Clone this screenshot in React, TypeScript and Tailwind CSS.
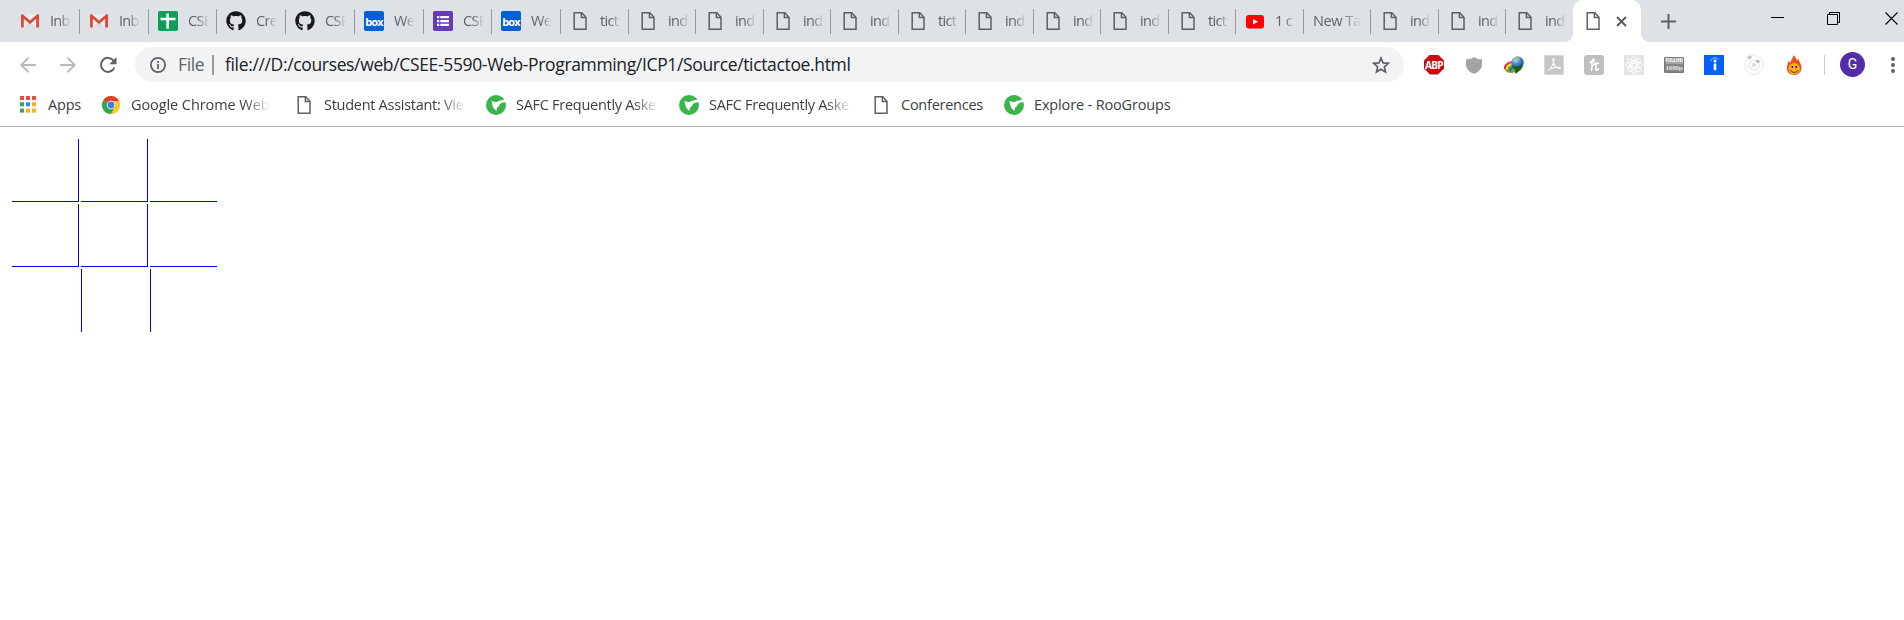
import type { ReactNode } from 'react';
import { FaGithub } from 'react-icons/fa';

type IconName = 'gmail' | 'sheet' | 'github' | 'box' | 'forms' | 'doc' | 'youtube' | 'none';

const tabs: { icon: IconName; title: string; width: string }[] = [
  { icon: 'gmail', title: 'Inb', width: 'w-[69px]' },
  { icon: 'gmail', title: 'Inb', width: 'w-[69px]' },
  { icon: 'sheet', title: 'CSE', width: 'w-[68px]' },
  { icon: 'github', title: 'Cre', width: 'w-[69px]' },
  { icon: 'github', title: 'CSE', width: 'w-[69px]' },
  { icon: 'box', title: 'We', width: 'w-[69px]' },
  { icon: 'forms', title: 'CSE', width: 'w-[68px]' },
  { icon: 'box', title: 'We', width: 'w-[69px]' },
  { icon: 'doc', title: 'tict', width: 'w-[68px]' },
  { icon: 'doc', title: 'ind', width: 'w-[67px]' },
  { icon: 'doc', title: 'ind', width: 'w-[68px]' },
  { icon: 'doc', title: 'ind', width: 'w-[67px]' },
  { icon: 'doc', title: 'ind', width: 'w-[68px]' },
  { icon: 'doc', title: 'tict', width: 'w-[67px]' },
  { icon: 'doc', title: 'ind', width: 'w-[68px]' },
  { icon: 'doc', title: 'ind', width: 'w-[67px]' },
  { icon: 'doc', title: 'ind', width: 'w-[68px]' },
  { icon: 'doc', title: 'tict', width: 'w-[67px]' },
  { icon: 'youtube', title: '1 c', width: 'w-[68px]' },
  { icon: 'none', title: 'New Ta', width: 'w-[67px]' },
  { icon: 'doc', title: 'ind', width: 'w-[68px]' },
  { icon: 'doc', title: 'ind', width: 'w-[67px]' },
  { icon: 'doc', title: 'ind', width: 'w-[67px]' },
];

function DocIcon() {
  return (
    <svg className="shrink-0" width="20" height="20" viewBox="0 0 20 20" fill="none" stroke="#5f6063" strokeWidth="1.5">
      <path d="M4.2 1.8h7.6l4.2 4.4v12H4.2z" />
      <path d="M11.4 1.8v4.8H16" />
    </svg>
  );
}

function RooIcon() {
  return (
    <svg className="shrink-0" width="20" height="20" viewBox="0 0 20 20">
      <circle cx="10" cy="10" r="10" fill="#39b54a" />
      <path d="M5.300 6L10 7.300l3.500-1.500L18.700 4.500 20 7l-4.200.8-2 1.500-.8 2-1.700 1-1 3.700-3.300-3.500-.7-3z" fill="#fff" />
    </svg>
  );
}

function TabIcon({ name }: { name: IconName }) {
  switch (name) {
    case 'gmail':
      return (
        <svg width="20" height="20" viewBox="0 0 20 20">
          <path d="M1.500 3.500h17v13h-17z" fill="#eeeeee" />
          <path d="M3.500 16.500L10 10l6.500 6.500z" fill="#dcdcdc" />
          <path d="M1 4.500C1 3.500 2 3 3 3.500l7 6 7-6c1-.5 2 0 2 1v12h-2.800V7.800L10 13 3.800 7.800v8.700H1z" fill="#dc483c" />
        </svg>
      );
    case 'sheet':
      return (
        <svg width="20" height="20" viewBox="0 0 20 20">
          <rect width="20" height="20" rx="1.800" fill="#0f9d58" />
          <path d="M8.300 2.500h2.600v4.200h6.600v2.600h-6.600v8.400H8.300V9.300H2.500V6.700h5.800z" fill="#fff" />
        </svg>
      );
    case 'github':
      return <FaGithub size={20} color="#191717" />;
    case 'box':
      return (
        <span className="flex h-5 w-5 items-center justify-center rounded-[2px] bg-[#0061d5] text-[11px] leading-none font-bold tracking-[-0.8px] text-white">
          box
        </span>
      );
    case 'forms':
      return (
        <svg width="20" height="20" viewBox="0 0 20 20">
          <rect width="20" height="20" rx="1.800" fill="#673ab7" />
          <path d="M4 5h2.300v2.300H4zM7.300 5H16v2.300H7.300zM4 8.900h2.300v2.300H4zM7.300 8.900H16v2.300H7.300zM4 12.800h2.300v2.300H4zM7.300 12.800H16v2.300H7.300z" fill="#fff" />
        </svg>
      );
    case 'youtube':
      return (
        <svg width="20" height="20" viewBox="0 0 20 20">
          <rect x="1" y="4" width="18" height="13.400" rx="3" fill="#f00" />
          <path d="M8 7.900l5 2.800-5 2.800z" fill="#fff" />
        </svg>
      );
    default:
      return <DocIcon />;
  }
}

function Tab({ icon, title, width, last }: { icon: IconName; title: string; width: string; last: boolean }) {
  const wide = icon === 'none';
  return (
    <div className={`flex h-[25px] shrink-0 items-center ${width} ${last ? '' : 'border-r border-[#989a9d]'}`}>
      {!wide && (
        <span className="ml-[9px] h-5 w-5 shrink-0">
          <TabIcon name={icon} />
        </span>
      )}
      <span
        className={
          wide
            ? 'ml-[9px] w-[48px] overflow-hidden pb-px text-[14.500px] tracking-[-0.4px] whitespace-nowrap text-[#5f6368] [mask-image:linear-gradient(to_right,#000_60%,transparent)]'
            : 'ml-[10px] w-[21px] overflow-hidden pb-px text-[14.500px] tracking-[-0.7px] whitespace-nowrap text-[#5f6368] [mask-image:linear-gradient(to_right,#000_45%,transparent)]'
        }
      >
        {title}
      </span>
    </div>
  );
}

function TabStrip() {
  return (
    <header className="flex h-[42px] bg-[#dee1e6] pl-[11px]">
      <div className="flex items-center">
        {tabs.map((tab, i) => (
          <Tab key={i} {...tab} last={i === tabs.length - 1} />
        ))}
      </div>
      <div className="relative flex w-[68px] items-center rounded-t-[10px] bg-white pl-[10px]">
        <span className="absolute bottom-0 -left-2 h-2 w-2 bg-[radial-gradient(circle_at_0_0,transparent_7.5px,#fff_8px)]" />
        <span className="absolute -right-2 bottom-0 h-2 w-2 bg-[radial-gradient(circle_at_100%_0,transparent_7.5px,#fff_8px)]" />
        <DocIcon />
        <svg className="ml-[13px]" width="11" height="11" viewBox="0 0 11 11" stroke="#55585c" strokeWidth="1.900">
          <path d="M1 1l9 9M10 1l-9 9" />
        </svg>
      </div>
      <svg className="mt-[14px] ml-5" width="15" height="15" viewBox="0 0 15 15" stroke="#5f6368" strokeWidth="2">
        <path d="M7.500 0v15M0 7.500h15" />
      </svg>
      <div className="mt-3 ml-auto flex h-[13px] gap-[43px] pr-[6px]">
        <svg width="13" height="13" stroke="#000">
          <path d="M0 5.500h13" />
        </svg>
        <svg width="13" height="13" fill="none" stroke="#000">
          <path d="M.5 2.500h10v10H.5zM2.500 2.500v-2h10v10h-2" />
        </svg>
        <svg width="13" height="13" className="ml-[2px]" stroke="#000" strokeWidth="1.100">
          <path d="M.5.5l12 12M12.500.5l-12 12" />
        </svg>
      </div>
    </header>
  );
}

const extensions: ReactNode[] = [
  <span className="flex h-5 w-5 items-center justify-center bg-[#c70d12] font-['Noto_Sans'] text-[10px] leading-none font-bold tracking-[-0.600px] text-white [clip-path:polygon(30%_0,70%_0,100%_30%,100%_70%,70%_100%,30%_100%,0_70%,0_30%)]">
    ABP
  </span>,
  <svg width="20" height="20">
    <path d="M10 2c2 1.500 5 2.300 8 2.300v5c0 4.500-3 7.500-8 9.700-5-2.200-8-5.200-8-9.700v-5C5 4.300 8 3.500 10 2z" fill="#a4a4a4" />
  </svg>,
  <svg width="20" height="20" fill="none">
    <defs>
      <radialGradient id="globe" cx=".35" cy=".25" r=".8">
        <stop offset="0" stopColor="#c5e4f8" />
        <stop offset=".45" stopColor="#4f8fd0" />
        <stop offset="1" stopColor="#123c78" />
      </radialGradient>
    </defs>
    <path d="M.8 14.500c1 3.500 6 4.500 11 2.500L10 8 3 9z" fill="#7da52f" />
    <path d="M1 14C0 9 6 6.500 11 7.500" stroke="#e8322c" strokeWidth="2" />
    <path d="M2.900 14.800C2 11 7 8.500 11 9.300" stroke="#ffd53d" strokeWidth="1.900" />
    <path d="M4.700 15.500c-.5-3 3-5 7-4.500" stroke="#35a83d" strokeWidth="1.800" />
    <path d="M6.400 16.500c-.5-2.500 2-4 5-4" stroke="#3d58c8" strokeWidth="1.700" />
    <circle cx="13.500" cy="7.500" r="6.200" fill="url(#globe)" />
    <path d="M10 4c1.500-2 4-2.200 5.500-1.500l-1.500 2-3 .5z" fill="#a9b84c" />
    <path d="M8 10.500l5 1 6-.5-2 3.500-5.500 4.500-.5-4z" fill="#12641b" />
  </svg>,
  <svg width="20" height="20" fill="none">
    <path d="M.5.5h19v19H.5z" fill="#c6c6c6" stroke="#dadada" />
    <path d="M4 15.500c2-1 6-6 6-11 0-1.500-1.500-1-1 1 .6 4 3 7 6 8 2 .5 2-1.300 0-1.300-4 0-7 1-10 2.300" stroke="#fff" strokeWidth="1.100" />
  </svg>,
  <svg width="20" height="20" fill="none">
    <rect width="20" height="20" rx="3" fill="#bfbfbf" />
    <path d="M5.800 7.300c3 .7 4.900-1 4.200-2.600C9.200 3.500 7.600 5 8 8c.2 2.500 0 5-.5 7.300M8 11.500c1.800-2.500 4.200-3 4.200-.8 0 1.800-1.300 4.500.1 4.500 1 0 1.700-.7 2.200-1.500M11 8.300c1.200.4 2.300.3 3.500-.3" stroke="#fff" strokeWidth="1.500" strokeLinecap="round" />
  </svg>,
  <svg width="20" height="20" fill="none">
    <rect width="20" height="20" fill="#e3e3e3" />
    <g stroke="#fff" strokeWidth=".9">
      <circle cx="10" cy="10" r="2" />
      <ellipse cx="10" cy="10" rx="3.300" ry="8.500" />
      <ellipse cx="10" cy="10" rx="3.300" ry="8.500" transform="rotate(45 10 10)" />
      <ellipse cx="10" cy="10" rx="3.300" ry="8.500" transform="rotate(90 10 10)" />
      <ellipse cx="10" cy="10" rx="3.300" ry="8.500" transform="rotate(135 10 10)" />
    </g>
  </svg>,
  <span className="mt-[2px] flex h-4 w-5 flex-col items-center justify-center rounded-[1px] border border-[#777] bg-[#858585] font-bold text-[#e2e2e2]">
    <span className="flex h-[6px] w-[17px] items-center justify-center bg-[#a5a5a5] text-[4.500px] leading-none text-white">FULLHD</span>
    <span className="font-['Liberation_Serif'] text-[7px] leading-[8px] tracking-[-0.200px]">1080p</span>
  </span>,
  <svg width="20" height="20" fill="none">
    <rect width="20" height="20" fill="#0560fa" />
    <path d="M9.700 8.500h2.600v6.700H9.700z" fill="#fff" />
    <circle cx="11" cy="5.900" r="1.500" fill="#fff" />
    <path d="M6.500 6.300c.8-3.300 5-4.600 8-2" stroke="#a9c9ff" strokeWidth="1" />
  </svg>,
  <svg width="20" height="20" fill="none" stroke="#e6e6e6">
    <circle cx="10" cy="10" r="9.300" />
    <circle cx="10" cy="10" r="5" strokeWidth="1.200" />
    <circle cx="10" cy="10" r="2.200" fill="#dedede" stroke="none" />
    <circle cx="5.500" cy="2.300" r="2" fill="#c4c4c4" stroke="none" />
    <circle cx="13.800" cy="6.300" r="1.900" fill="#bdbdbd" stroke="none" />
  </svg>,
  <svg width="20" height="20" fill="none">
    <path d="M9 .3c3 1.500 3.500 3.500 4 5.200l1.500-2c0 3 3.200 5 3 9.500-.3 4.300-3.300 7-7.200 7s-7.500-2.700-7.500-6.700c0-3 1.300-4.500 1.600-7.300l2 2C6.300 5 9.500 4 9 .3z" fill="#e8501f" />
    <circle cx="10.200" cy="13.700" r="5.700" fill="#fbb01b" />
    <path d="M6.700 15.200c1.500 2.900 5.700 2.900 7.200 0" stroke="#3a2208" strokeWidth="1" />
    <ellipse cx="8.300" cy="12" rx=".8" ry="1.300" fill="#2b1a08" />
    <ellipse cx="12.200" cy="12" rx=".8" ry="1.300" fill="#2b1a08" />
  </svg>,
];

function Toolbar() {
  return (
    <div className="flex h-10 items-center pt-[5px]">
      <svg className="ml-5" width="16" height="16" fill="none" stroke="#b9bbbd" strokeWidth="2">
        <path d="M16 8H1.500M8.500.7L1.300 8l7.200 7.300" />
      </svg>
      <svg className="ml-6" width="16" height="16" fill="none" stroke="#b9bbbd" strokeWidth="2">
        <path d="M0 8h14.500M7.500.7L14.700 8l-7.200 7.300" />
      </svg>
      <svg className="ml-[23px]" width="18" height="18" fill="none" stroke="#5f6368" strokeWidth="2">
        <path d="M14.700 4.800A7 7 0 1 0 15.500 11.500" />
        <path d="M17.500 1v7.200h-7.200z" fill="#5f6368" stroke="none" />
      </svg>
      <div className="ml-[18px] flex h-[35px] w-[1269px] items-center rounded-full bg-[#f1f3f4] pl-[15px]">
        <svg width="16" height="16" fill="none" stroke="#5f6368" strokeWidth="1.800">
          <circle cx="8" cy="8" r="7.100" />
          <path d="M8 7v5M8 4v1.800" />
        </svg>
        <span className="ml-3 w-[27px] whitespace-nowrap text-[17.500px] tracking-[-0.400px] text-[#5f6368]">File</span>
        <span className="ml-[7px] h-5 w-[2px] bg-[#989b9e]" />
        <span className="ml-[11px] whitespace-nowrap text-[17.500px] tracking-[-0.350px] text-[#202124]">
          file:///D:/courses/web/CSEE-5590-Web-Programming/ICP1/Source/tictactoe.html
        </span>
        <svg className="mr-[14px] ml-auto" width="18" height="18" fill="none" stroke="#5f6368" strokeWidth="1.700">
          <path d="M9 2l2 4.900 5.300.4-4 3.500 1.200 5.200L9 13.200 4.500 16l1.200-5.200-4-3.500L7 6.900z" />
        </svg>
      </div>
      <div className="ml-5 flex gap-5">
        {extensions.map((icon, i) => (
          <span key={i} className="h-5 w-5">
            {icon}
          </span>
        ))}
      </div>
      <span className="ml-5 h-5 w-px bg-[#c9cbce]" />
      <span className="ml-[15px] flex h-[25px] w-[25px] items-center justify-center rounded-full bg-[#512da8] font-[Roboto] text-[14px] text-white">
        G
      </span>
      <svg className="ml-[26px]" width="4" height="16" fill="#5f6368">
        <circle cx="2" cy="2" r="2" />
        <circle cx="2" cy="8" r="2" />
        <circle cx="2" cy="14" r="2" />
      </svg>
    </div>
  );
}

function AppsIcon() {
  const colors = ['#f0483e', '#f0483e', '#f0483e', '#34a45b', '#2f86ee', '#f9b115', '#34a45b', '#f9b115', '#f9b115'];
  return (
    <svg width="16" height="17">
      {colors.map((c, i) => (
        <rect key={i} x={(i % 3) * 6} y={Math.floor(i / 3) * 6.3} width="4" height="4" fill={c} />
      ))}
    </svg>
  );
}

function ChromeIcon() {
  return (
    <svg width="18" height="18" viewBox="0 0 18 18">
      <circle cx="9" cy="9" r="9" fill="#fbc926" />
      <path d="M9 9L1.200 4.500A9 9 0 0 1 16.800 4.500z" fill="#e13f30" />
      <path d="M9 9L1.200 4.500A9 9 0 0 0 9 18L13 11z" fill="#2da94f" />
      <path d="M9 5h8.100A9 9 0 0 1 9 18l3.800-7z" fill="#fbc926" />
      <circle cx="9" cy="9" r="4.200" fill="#fff" />
      <circle cx="9" cy="9" r="3.400" fill="#3f7fe0" />
    </svg>
  );
}

function Bookmark({ icon, label, box, gap, fade }: { icon: ReactNode; label: string; box: string; gap: string; fade?: boolean }) {
  return (
    <div className={`flex items-center ${gap}`}>
      {icon}
      <span
        className={`overflow-hidden whitespace-nowrap text-[14.500px] leading-6 ${box} ${
          fade ? '[mask-image:linear-gradient(to_right,#000_82%,transparent)]' : ''
        }`}
      >
        {label}
      </span>
    </div>
  );
}

function BookmarksBar() {
  return (
    <nav className="flex h-[45px] items-center border-b border-[#b6b4b6] pt-px text-[#3c4043]">
      <Bookmark icon={<AppsIcon />} label="Apps" gap="ml-5 gap-3" box="w-[35px] tracking-[-0.200px]" />
      <Bookmark icon={<ChromeIcon />} label="Google Chrome Web" gap="ml-[19px] gap-[11px]" box="w-[139px] tracking-[-0.080px]" fade />
      <Bookmark icon={<DocIcon />} label="Student Assistant: Vie" gap="ml-[24px] gap-[10px]" box="w-[142px] tracking-[-0.280px]" fade />
      <Bookmark icon={<RooIcon />} label="SAFC Frequently Aske" gap="ml-[20px] gap-[10px]" box="w-[143px] tracking-[-0.280px]" fade />
      <Bookmark icon={<RooIcon />} label="SAFC Frequently Aske" gap="ml-[20px] gap-[10px]" box="w-[143px] tracking-[-0.280px]" fade />
      <Bookmark icon={<DocIcon />} label="Conferences" gap="ml-[19px] gap-[10px]" box="w-[85px] tracking-[-0.250px]" />
      <Bookmark icon={<RooIcon />} label="Explore - RooGroups" gap="ml-[18px] gap-[10px]" box="w-[150px] tracking-[-0.150px]" />
    </nav>
  );
}

const cells = [
  'border-r border-b',
  'border-r border-b',
  'border-b',
  'border-r border-b',
  'border-r border-b',
  'border-b',
  '',
  'border-l',
  'border-l',
];

export default function App() {
  return (
    <div className="h-[620px] w-[1904px] overflow-hidden bg-white font-['Open_Sans',sans-serif]">
      <TabStrip />
      <Toolbar />
      <BookmarksBar />
      <main className="pt-3 pl-3">
        <div className="grid w-[205px] grid-cols-[67px_67px_67px] gap-[2px]">
          {cells.map((edges, i) => (
            <div key={i} className={`h-[63px] border-[#0000ff] ${edges}`} />
          ))}
        </div>
      </main>
    </div>
  );
}
